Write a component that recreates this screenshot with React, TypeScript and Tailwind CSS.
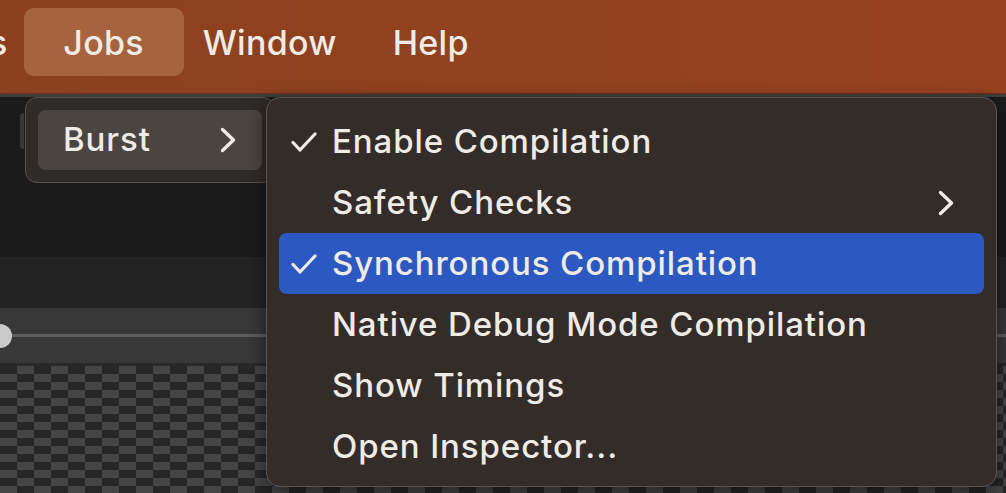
import React from "react";

const Check = () => (
  <svg width="26" height="20" viewBox="0 0 26 20" fill="none">
    <path
      d="M2 10.5 L9 18 L24 2"
      stroke="#efebe7"
      strokeWidth="3.2"
      strokeLinecap="round"
      strokeLinejoin="round"
    />
  </svg>
);

const Chevron = () => (
  <svg width="16" height="26" viewBox="0 0 16 26" fill="none">
    <path
      d="M2.5 2.5 L13.5 13 L2.5 23.5"
      stroke="#efebe7"
      strokeWidth="3.4"
      strokeLinecap="round"
      strokeLinejoin="round"
    />
  </svg>
);

interface RowProps {
  label: string;
  checked?: boolean;
  active?: boolean;
  submenu?: boolean;
}

const Row: React.FC<RowProps> = ({ label, checked, active, submenu }) => {
  return (
    <div
      className={
        "flex items-center h-[61px] pl-[12px] pr-[30px] rounded-[8px] " +
        (active ? "bg-[#2c59c1]" : "")
      }
    >
      <div className="w-[41px] flex items-center">{checked && <Check />}</div>
      <span className="flex-1 whitespace-nowrap">{label}</span>
      {submenu && <Chevron />}
    </div>
  );
};

export default function App() {
  return (
    <div
      className="relative w-[1006px] h-[493px] overflow-hidden bg-[#1c1b1b] text-[#efebe7] font-medium"
      style={{ fontFamily: "Inter, 'Noto Sans', sans-serif" }}
    >
      {/* menu bar */}
      <div className="h-[94px] flex items-start pt-[8px] bg-gradient-to-r from-[#8b401f] via-[#92421f] to-[#97421f] border-b border-[#6b3318] text-[34px] tracking-[0.3px]">
        <span className="h-[68px] flex items-center -ml-[11px] mr-[16px]">s</span>
        <div className="h-[68px] w-[160px] rounded-[10px] bg-[#a6633e] flex items-center justify-center">
          Jobs
        </div>
        <span className="h-[68px] flex items-center ml-[19px]">Window</span>
        <span className="h-[68px] flex items-center ml-[56px]">Help</span>
      </div>
      <div className="h-[3px] bg-[#3f3d3c]" />

      {/* editor background bands */}
      <div className="h-[160px] bg-[#1c1b1b] flex items-start pt-[16px]">
        <div className="w-[4px] h-[36px] ml-[20px] rounded-l bg-[#3a3837]" />
      </div>
      <div className="h-[51px] bg-[#242323]" />
      <div className="h-[55px] bg-[#393838] flex items-center">
        <div className="w-[24px] h-[24px] -ml-[12px] rounded-full bg-[#c9c9c9] shrink-0" />
        <div className="flex-1 h-[3px] bg-[#5e5e5e]" />
      </div>
      <div className="h-[3px] bg-[#2a2929]" />
      <div className="h-[130px] bg-[repeating-conic-gradient(#454545_0_25%,#272727_0_50%)] bg-[length:34px_16px]" />

      {/* Jobs menu */}
      <div className="absolute left-[25px] top-[97px] w-[250px] h-[86px] rounded-[12px] bg-[#2f2b29] border border-[#57514d] p-[12px] text-[33px] tracking-[0.9px]">
        <div className="h-[60px] rounded-[8px] bg-[#4a4541] flex items-center pl-[25px] pr-[26px]">
          <span className="flex-1">Burst</span>
          <Chevron />
        </div>
      </div>

      {/* Burst submenu */}
      <div className="absolute left-[266px] top-[97px] w-[731px] h-[390px] rounded-[14px] bg-[#342c29] border border-[#5c5451] pt-[13px] px-[12px] text-[33px] tracking-[0.9px] shadow-[0_6px_20px_rgba(0,0,0,0.5)]">
        <Row label="Enable Compilation" checked />
        <Row label="Safety Checks" submenu />
        <Row label="Synchronous Compilation" checked active />
        <Row label="Native Debug Mode Compilation" />
        <Row label="Show Timings" />
        <Row label="Open Inspector..." />
      </div>
    </div>
  );
}
